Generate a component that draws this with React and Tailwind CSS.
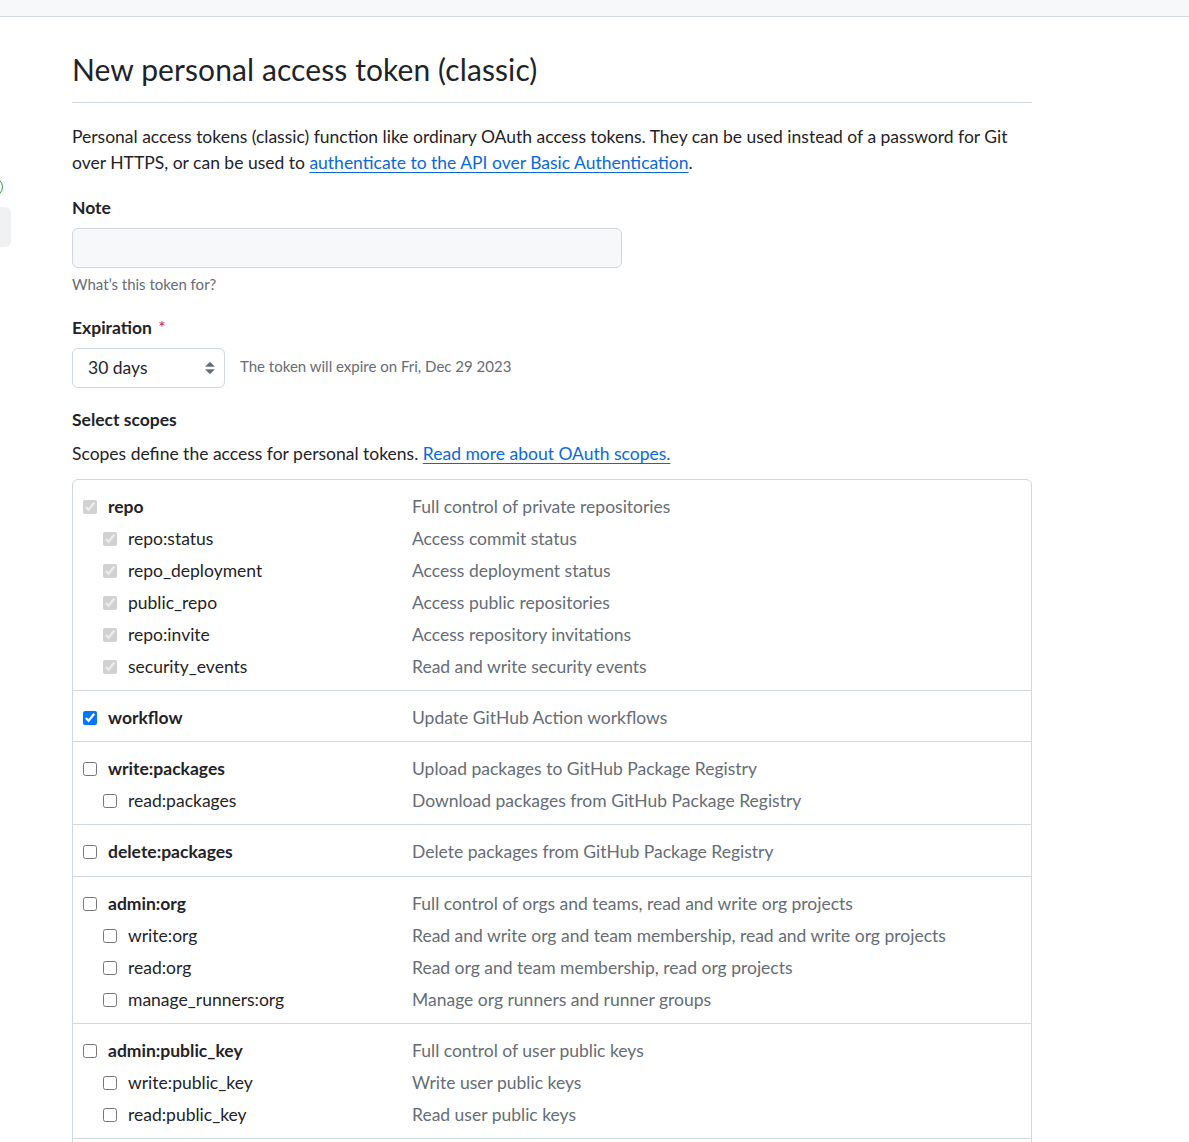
const groups = [
  {
    name: 'repo',
    desc: 'Full control of private repositories',
    state: 'disabled',
    subs: [
      ['repo:status', 'Access commit status'],
      ['repo_deployment', 'Access deployment status'],
      ['public_repo', 'Access public repositories'],
      ['repo:invite', 'Access repository invitations'],
      ['security_events', 'Read and write security events'],
    ],
  },
  { name: 'workflow', desc: 'Update GitHub Action workflows', state: 'checked', subs: [] },
  {
    name: 'write:packages',
    desc: 'Upload packages to GitHub Package Registry',
    subs: [['read:packages', 'Download packages from GitHub Package Registry']],
  },
  { name: 'delete:packages', desc: 'Delete packages from GitHub Package Registry', subs: [] },
  {
    name: 'admin:org',
    desc: 'Full control of orgs and teams, read and write org projects',
    subs: [
      ['write:org', 'Read and write org and team membership, read and write org projects'],
      ['read:org', 'Read org and team membership, read org projects'],
      ['manage_runners:org', 'Manage org runners and runner groups'],
    ],
  },
  {
    name: 'admin:public_key',
    desc: 'Full control of user public keys',
    subs: [
      ['write:public_key', 'Write user public keys'],
      ['read:public_key', 'Read user public keys'],
    ],
  },
  {
    name: 'admin:repo_hook',
    desc: 'Full control of repository hooks',
    subs: [
      ['write:repo_hook', 'Write repository hooks'],
      ['read:repo_hook', 'Read repository hooks'],
    ],
  },
];

function Box({ state }) {
  if (state === 'disabled') {
    return <input type="checkbox" disabled defaultChecked className="m-0 h-[14px] w-[14px] shrink-0" />;
  }
  if (state === 'checked') {
    return <input type="checkbox" defaultChecked className="m-0 h-[14px] w-[14px] shrink-0" />;
  }
  return <input type="checkbox" className="m-0 h-[14px] w-[14px] shrink-0" />;
}

function Row({ name, desc, state, top }) {
  return (
    <div className="flex h-[32px] items-center">
      <div className={top ? 'flex w-[339px] items-center gap-[11px] pl-[10px]' : 'flex w-[339px] items-center gap-[11px] pl-[30px]'}>
        <Box state={state} />
        <span className={top ? 'font-bold text-[#1f2328]' : 'text-[#1f2328]'}>{name}</span>
      </div>
      <div className="text-[#656d76]">{desc}</div>
    </div>
  );
}

function SelectArrows() {
  return (
    <svg width="20" height="20" viewBox="0 0 16 16" fill="#656d76">
      <path d="M4.427 9.427l3.396 3.396a.25.25 0 00.354 0l3.396-3.396A.25.25 0 0011.396 9H4.604a.25.25 0 00-.177.427zM4.427 6.573l3.396-3.396a.25.25 0 01.354 0l3.396 3.396A.25.25 0 0111.396 7H4.604a.25.25 0 01-.177-.427z" />
    </svg>
  );
}

export default function App() {
  return (
    <div className="h-[1142px] overflow-hidden bg-white font-['Lato',sans-serif] text-[17.5px] leading-[26px] text-[#1f2328]">
      <div className="h-[17px] border-b border-[#d0d7de] bg-[#f6f8fa]" />
      <div className="flex">
        <aside className="w-[12px] shrink-0 overflow-hidden pt-[160px]">
          <div className="ml-[-17px] h-[20px] w-[20px] rounded-full border-[1.5px] border-[#2da44e]" />
          <div className="ml-[-189px] mt-[10px] h-[40px] w-[200px] rounded-[6px] bg-[#eff1f3]" />
        </aside>
        <main className="ml-[60px] w-[960px] shrink-0 pt-[34px]">
          <h2 className="border-b border-[#d0d7de] pb-[13px] text-[30px] font-normal leading-[37.5px] tracking-[0.1px] text-[#1f2328]">
            New personal access token (classic)
          </h2>
          <p className="mt-[21px]">
            Personal access tokens (classic) function like ordinary OAuth access tokens. They can be used instead of a password for Git over HTTPS, or can be used to{' '}
            <a className="text-[#0969da] underline underline-offset-[3px]" href="#">authenticate to the API over Basic Authentication</a>.
          </p>

          <div className="mt-[19px] font-bold">Note</div>
          <div className="mt-[7px] h-[40px] w-[550px] rounded-[6px] border border-[#d0d7de] bg-[#f6f8fa]" />
          <div className="mt-[5px] text-[15px] leading-[22px] text-[#656d76]">What’s this token for?</div>

          <div className="mt-[20px] font-bold">
            Expiration <span className="ml-[2px] font-normal text-[#cf222e]">*</span>
          </div>
          <div className="mt-[7px] flex items-center">
            <div className="flex h-[40px] w-[153px] items-center justify-between rounded-[6px] border border-[#d0d7de] bg-white pl-[15px] pr-[4px]">
              <span>30 days</span>
              <SelectArrows />
            </div>
            <span className="ml-[15px] pb-[4px] text-[15px] leading-[22px] text-[#656d76]">The token will expire on Fri, Dec 29 2023</span>
          </div>

          <div className="mt-[19px] font-bold">Select scopes</div>
          <p className="mt-[8px]">
            Scopes define the access for personal tokens.{' '}
            <a className="text-[#0969da] underline underline-offset-[3px]" href="#">Read more about OAuth scopes.</a>
          </p>

          <div className="mt-[12px] rounded-[6px] border border-[#d0d7de]">
            {groups.map((g, i) => (
              <div key={g.name} className={i === 0 ? 'pb-[7.3px] pt-[11px]' : 'border-t border-[#d0d7de] pb-[7.3px] pt-[11px]'}>
                <Row name={g.name} desc={g.desc} state={g.state} top />
                {g.subs.map(([n, d]) => (
                  <Row key={n} name={n} desc={d} state={g.state === 'disabled' ? 'disabled' : undefined} />
                ))}
              </div>
            ))}
          </div>
        </main>
      </div>
    </div>
  );
}
